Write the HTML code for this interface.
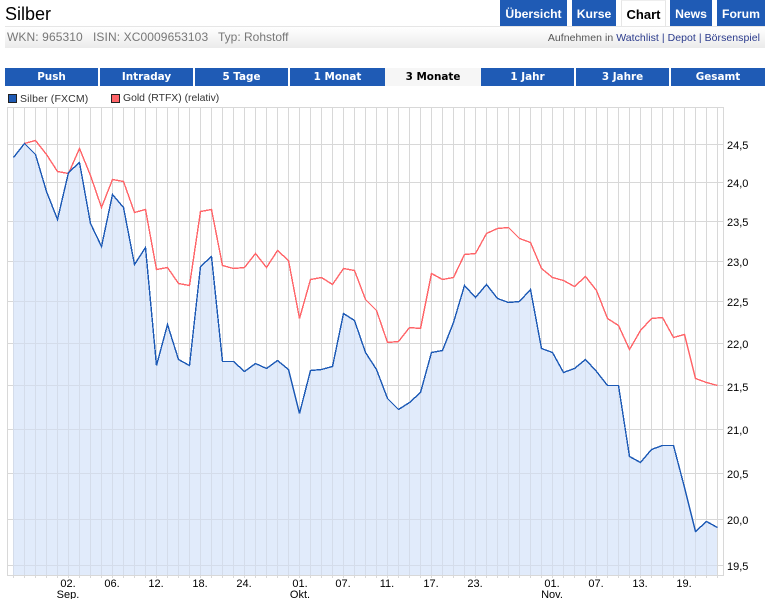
<!DOCTYPE html>
<html lang="de"><head><meta charset="utf-8"><title>Silber</title>
<style>
html,body{margin:0;padding:0;background:#fff;width:768px;height:599px;overflow:hidden}
body{position:relative;font-family:"Liberation Sans",Arial,sans-serif;color:#000}
.a{position:absolute;white-space:nowrap}
.n{position:absolute;top:0;height:26px;background:#1f5bb5;color:#fff;font:bold 12.2px/28px "Liberation Sans",sans-serif;text-align:center}
.t{position:absolute;top:68px;height:18px;background:#1f5bb5;color:#fff;font:bold 10.4px/18px "DejaVu Sans",sans-serif;text-align:center}
svg{position:absolute;left:0;top:0}
svg text{font:11px "Liberation Sans",sans-serif;fill:#000}
</style></head><body>
<div class="a" style="left:5px;top:3px;font-size:18px;line-height:22px">Silber</div>
<div class="n" style="left:500px;width:67px">Übersicht</div>
<div class="n" style="left:572px;width:44px">Kurse</div>
<div class="n" style="left:621px;width:43px;background:#fff;color:#000;border:1px solid #e6e6e6;border-bottom:0;border-top-color:#eee;font-size:13px">Chart</div>
<div class="n" style="left:670px;width:42px">News</div>
<div class="n" style="left:717px;width:48px">Forum</div>
<div class="a" style="left:5px;top:26px;width:760px;height:1px;background:#e6e6e6"></div>
<div class="a" style="left:5px;top:27px;width:760px;height:21px;background:linear-gradient(#fff,#ebebeb)"></div>
<div class="a" style="left:7px;top:29px;font-size:12px;line-height:16px;color:#777;letter-spacing:.1px">WKN: 965310</div>
<div class="a" style="left:93px;top:29px;font-size:12px;line-height:16px;color:#777;letter-spacing:.1px">ISIN: XC0009653103</div>
<div class="a" style="left:218px;top:29px;font-size:12px;line-height:16px;color:#777">Typ: Rohstoff</div>
<div class="a" style="right:8px;top:30px;font-size:10.5px;line-height:16px;color:#555;letter-spacing:.05px">Aufnehmen in <span style="color:#2a3a8c">Watchlist</span> <span style="color:#2a3a8c">|</span> <span style="color:#2a3a8c">Depot</span> <span style="color:#2a3a8c">|</span> <span style="color:#2a3a8c">Börsenspiel</span></div>
<div class="t" style="left:5px;width:93px">Push</div>
<div class="t" style="left:100px;width:93px">Intraday</div>
<div class="t" style="left:195px;width:93px">5 Tage</div>
<div class="t" style="left:290px;width:95px">1 Monat</div>
<div class="t" style="left:385px;width:96px;background:#f6f6f6;color:#000">3 Monate</div>
<div class="t" style="left:481px;width:93px">1 Jahr</div>
<div class="t" style="left:576px;width:93px">3 Jahre</div>
<div class="t" style="left:671px;width:94px">Gesamt</div>
<div class="a" style="left:8px;top:94px;width:7px;height:7px;background:#1f5bb5;border:1px solid #222"></div>
<div class="a" style="left:20px;top:91px;font-size:10.5px;line-height:16px;color:#333;letter-spacing:.15px">Silber (FXCM)</div>
<div class="a" style="left:111px;top:94px;width:7px;height:7px;background:#ff6468;border:1px solid #222"></div>
<div class="a" style="left:123px;top:91px;font-size:10.4px;line-height:16px;color:#333">Gold (RTFX) (relativ)</div>
<svg width="768" height="599" viewBox="0 0 768 599">
<defs>
<clipPath id="c"><polygon points="13,157 24,143 35,154 46,191 57,219 68,172 79,162 90,223 101,246 112,194 123,207 134,264 145,249 156,365 167,324 178,359 189,365 200,266 211,256 222,361 233,361 244,371 255,363 266,368 277,360 288,369 299,413 310,370 321,369 332,366 343,313 354,320 365,352 376,369 387,398 398,409 409,402 420,392 431,352 442,350 453,322 464,285 475,297 486,284 497,298 508,302 519,301 530,289 541,348 552,352 563,372 574,368 585,359 596,371 607,385 618,385 629,456 640,462 651,449 662,445 673,445 684,487 695,531 706,521 717,527 717,575 13,575"/></clipPath>
</defs>
<rect x="7" y="107" width="717" height="1" fill="#d8d8d8"/>
<rect x="7" y="107" width="1" height="469" fill="#d8d8d8"/>
<rect x="723" y="107" width="1" height="469" fill="#d8d8d8"/>
<line x1="13" x2="718" y1="341.5" y2="341.5" stroke="#d8d8d8" stroke-width="467" stroke-dasharray="1 10" shape-rendering="crispEdges"/>
<g fill="#d8d8d8">
<rect x="7" y="144" width="716" height="1"/><rect x="7" y="182" width="716" height="1"/><rect x="7" y="221" width="716" height="1"/><rect x="7" y="261" width="716" height="1"/><rect x="7" y="301" width="716" height="1"/><rect x="7" y="343" width="716" height="1"/><rect x="7" y="385" width="716" height="1"/><rect x="7" y="429" width="716" height="1"/><rect x="7" y="473" width="716" height="1"/><rect x="7" y="519" width="716" height="1"/><rect x="7" y="565" width="716" height="1"/>
<rect x="7" y="575" width="717" height="1"/>
</g>
<line x1="13" x2="718" y1="577" y2="577" stroke="#d8d8d8" stroke-width="2" stroke-dasharray="1 10" shape-rendering="crispEdges"/>
<g clip-path="url(#c)">
<rect x="0" y="100" width="768" height="475" fill="#e1ebfb"/>
<line x1="13" x2="718" y1="341.5" y2="341.5" stroke="#d4dcea" stroke-width="467" stroke-dasharray="1 10" shape-rendering="crispEdges"/>
<g fill="#d4dcea">
<rect x="7" y="301" width="716" height="1"/><rect x="7" y="343" width="716" height="1"/><rect x="7" y="385" width="716" height="1"/><rect x="7" y="429" width="716" height="1"/><rect x="7" y="473" width="716" height="1"/><rect x="7" y="519" width="716" height="1"/><rect x="7" y="565" width="716" height="1"/><rect x="7" y="144" width="716" height="1"/><rect x="7" y="182" width="716" height="1"/><rect x="7" y="221" width="716" height="1"/><rect x="7" y="261" width="716" height="1"/>
</g>
</g>
<g transform="translate(.5,.5)" fill="none" stroke-width="1.4" shape-rendering="crispEdges">
<polyline stroke="#ff6468" points="24,143 35,140 46,154 57,171 68,173 79,148 90,175 101,207 112,179 123,181 134,212 145,209 156,269 167,267 178,283 189,285 200,211 211,209 222,265 233,268 244,267 255,253 266,267 277,250 288,260 299,318 310,279 321,277 332,284 343,268 354,270 365,299 376,310 387,342 398,341 409,327 420,328 431,273 442,279 453,277 464,254 475,253 486,233 497,228 508,227 519,238 530,242 541,268 552,277 563,280 574,286 585,276 596,290 607,318 618,325 629,349 640,330 651,318 662,317 673,337 684,334 695,378 706,382 717,385"/>
<polyline stroke="#1c59b5" points="13,157 24,143 35,154 46,191 57,219 68,172 79,162 90,223 101,246 112,194 123,207 134,264 145,247 156,365 167,324 178,359 189,365 200,266 211,256 222,361 233,361 244,371 255,363 266,368 277,360 288,369 299,413 310,370 321,369 332,366 343,313 354,320 365,352 376,369 387,398 398,409 409,402 420,392 431,352 442,350 453,322 464,285 475,297 486,284 497,298 508,302 519,301 530,289 541,348 552,352 563,372 574,368 585,359 596,371 607,385 618,385 629,456 640,462 651,449 662,445 673,445 684,487 695,531 706,521 717,527"/>
</g>
<g>
<text x="727" y="149">24,5</text><text x="727" y="187">24,0</text><text x="727" y="226">23,5</text><text x="727" y="266">23,0</text><text x="727" y="306">22,5</text><text x="727" y="348">22,0</text><text x="727" y="391">21,5</text><text x="727" y="434">21,0</text><text x="727" y="478">20,5</text><text x="727" y="524">20,0</text><text x="727" y="570">19,5</text>
</g>
<g text-anchor="middle">
<text x="68" y="587">02.</text><text x="68" y="598">Sep.</text>
<text x="112" y="587">06.</text><text x="156" y="587">12.</text><text x="200" y="587">18.</text><text x="244" y="587">24.</text>
<text x="300" y="587">01.</text><text x="300" y="598">Okt.</text>
<text x="343" y="587">07.</text><text x="387" y="587">11.</text><text x="431" y="587">17.</text><text x="475" y="587">23.</text>
<text x="552" y="587">01.</text><text x="552" y="598">Nov.</text>
<text x="596" y="587">07.</text><text x="640" y="587">13.</text><text x="684" y="587">19.</text>
</g>
</svg>
</body></html>
